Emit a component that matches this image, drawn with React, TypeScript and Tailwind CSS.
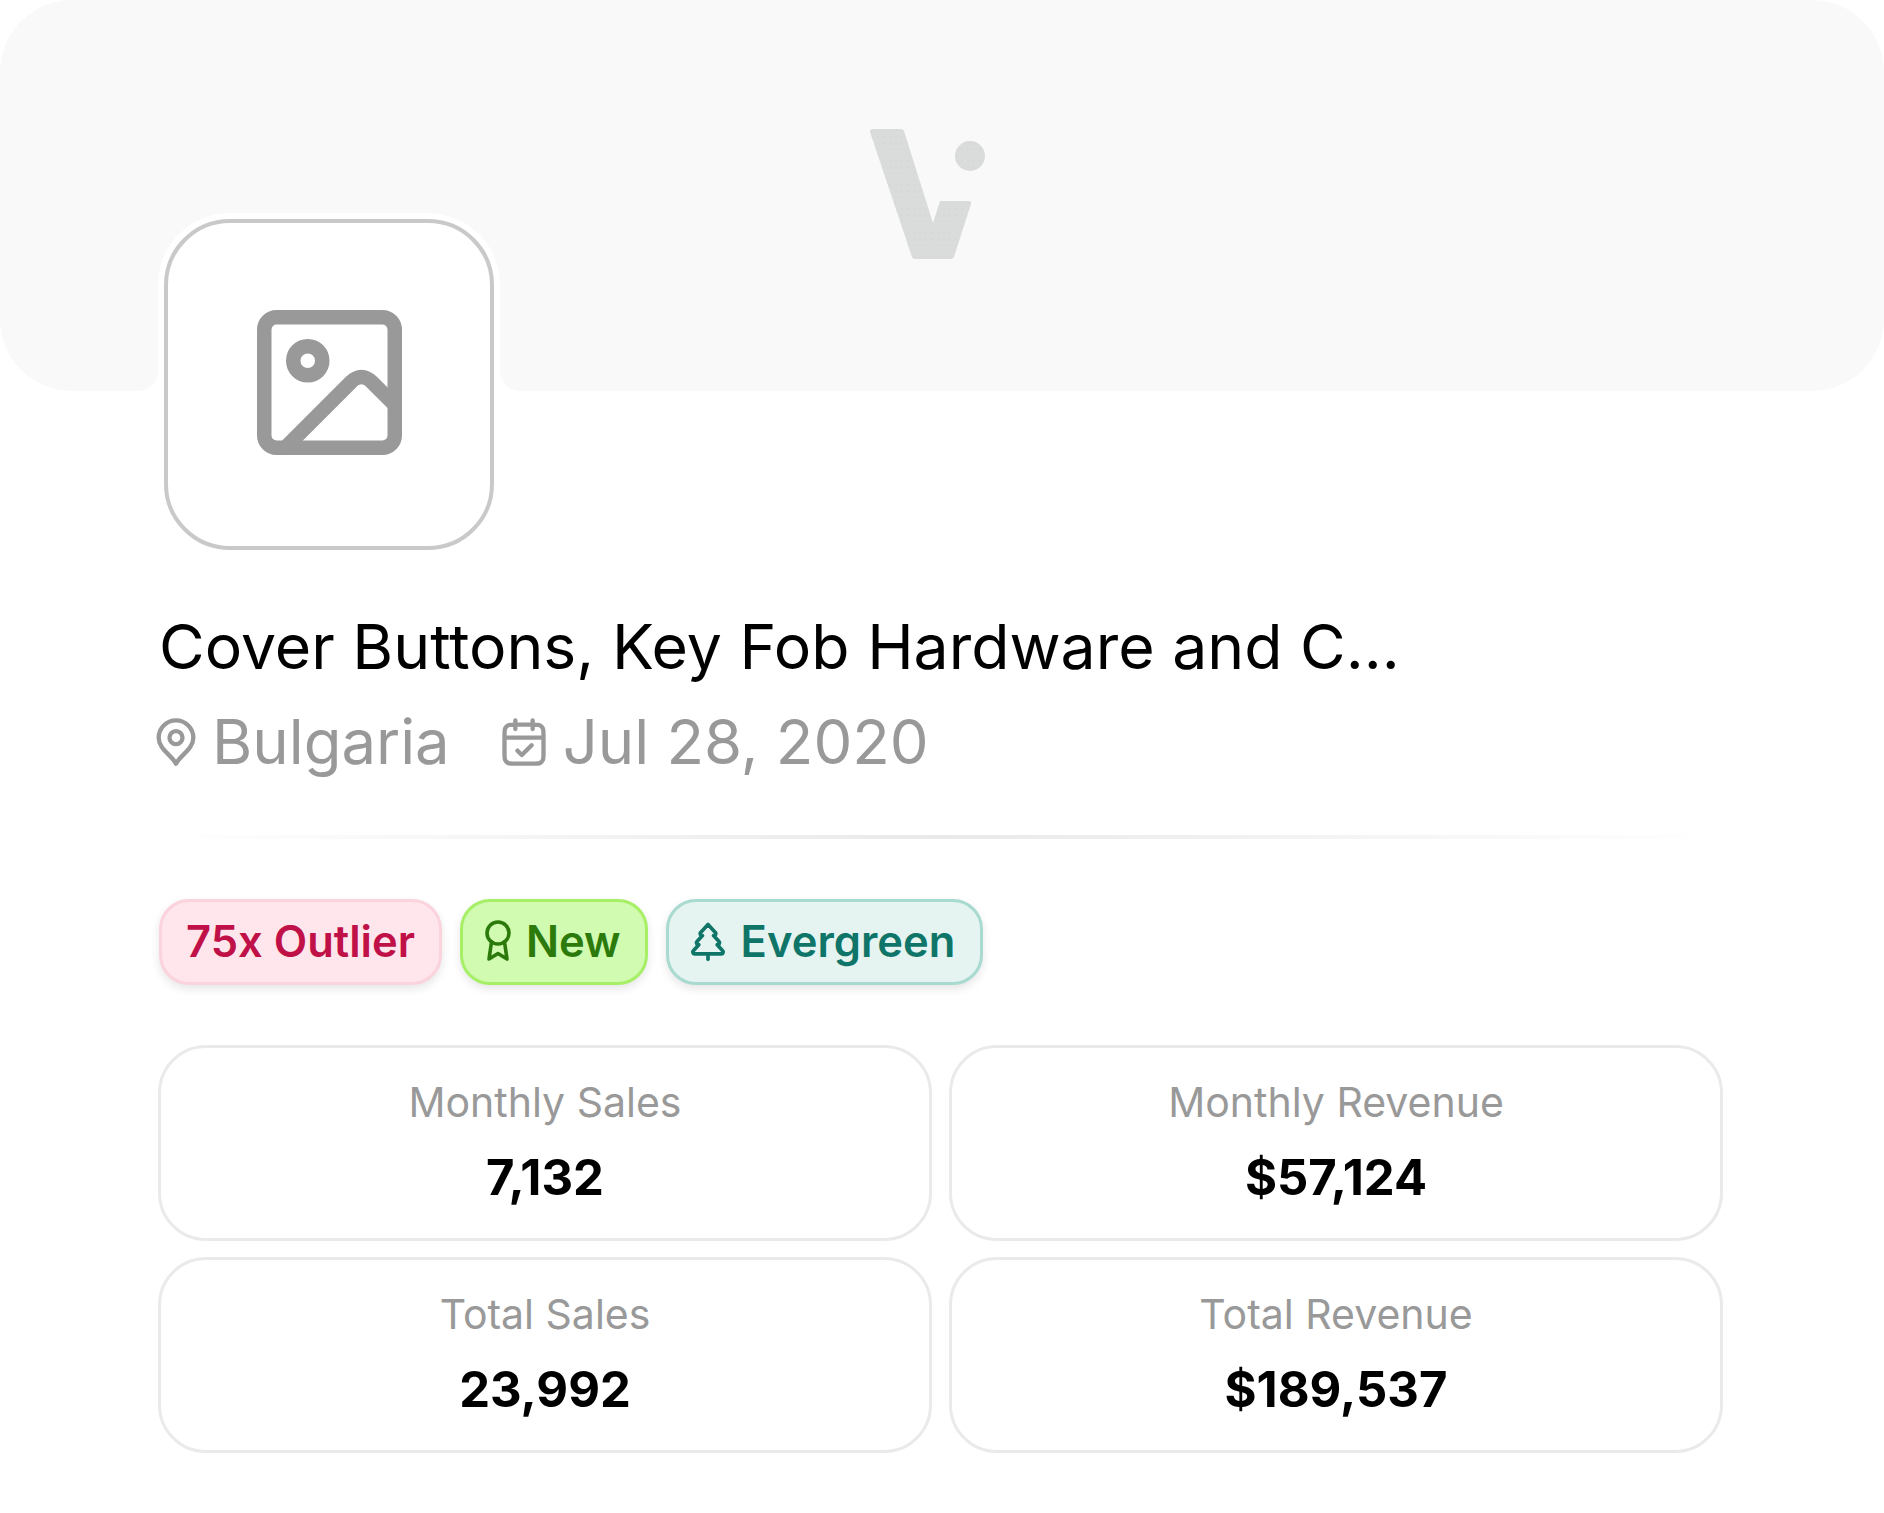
import { TreePine } from "lucide-react"

const stats = [
  { label: "Monthly Sales", value: "7,132" },
  { label: "Monthly Revenue", value: "$57,124" },
  { label: "Total Sales", value: "23,992" },
  { label: "Total Revenue", value: "$189,537" },
]

function Logo() {
  return (
    <svg width="116" height="131" viewBox="0 0 116 131">
      <defs>
        <pattern id="grain" width="6" height="6" patternUnits="userSpaceOnUse">
          <rect width="6" height="6" fill="#dadcdc" />
          <circle cx="2" cy="2" r="0.6" fill="#cbcdcd" />
        </pattern>
      </defs>
      <path
        d="M3 0H31Q33 0 34 2L63 94L70 72H99Q102 72 101 75L84 128Q83 130 81 130H45Q43 130 42 128L0 3Q0 0 3 0Z"
        fill="url(#grain)"
      />
      <circle cx="100" cy="27" r="15" fill="url(#grain)" />
    </svg>
  )
}

function ImageIcon() {
  return (
    <svg width="145" height="145" viewBox="0 0 20 20" fill="none" stroke="#999999" strokeWidth="2" strokeLinecap="round" strokeLinejoin="round">
      <rect x="1" y="1" width="18" height="18" rx="1.7" />
      <circle cx="7" cy="7" r="2" />
      <path d="M3.9 19L12.9 10Q14.4 8.5 15.9 10L19 13.1" />
    </svg>
  )
}

function PinIcon() {
  return (
    <svg width="52" height="52" viewBox="0 0 24 24" fill="none" stroke="#999999" strokeWidth="2" strokeLinecap="round" strokeLinejoin="round">
      <path d="M12 13C13.6569 13 15 11.6569 15 10C15 8.34315 13.6569 7 12 7C10.3431 7 9 8.34315 9 10C9 11.6569 10.3431 13 12 13Z" />
      <path d="M12 22C14 18 20 15.4183 20 10C20 5.58172 16.4183 2 12 2C7.58172 2 4 5.58172 4 10C4 15.4183 10 18 12 22Z" />
    </svg>
  )
}

function CalendarIcon() {
  return (
    <svg width="52" height="52" viewBox="0 0 24 24" fill="none" stroke="#999999" strokeWidth="2" strokeLinecap="round" strokeLinejoin="round">
      <path d="M21 10H3M16 2V6M8 2V6M9 16L11 18L15.5 13.5M7.8 22H16.2C17.88 22 18.72 22 19.362 21.673C19.926 21.385 20.385 20.927 20.673 20.362C21 19.72 21 18.88 21 17.2V8.8C21 7.12 21 6.28 20.673 5.638C20.385 5.074 19.926 4.615 19.362 4.327C18.72 4 17.88 4 16.2 4H7.8C6.12 4 5.28 4 4.638 4.327C4.074 4.615 3.615 5.074 3.327 5.638C3 6.28 3 7.12 3 8.8V17.2C3 18.88 3 19.72 3.327 20.362C3.615 20.927 4.074 21.385 4.638 21.673C5.28 22 6.12 22 7.8 22Z" />
    </svg>
  )
}

function RibbonIcon() {
  return (
    <svg width="28" height="44" viewBox="0 0 28 44" fill="none" stroke="#2b7a0b" strokeWidth="3.6" strokeLinecap="round" strokeLinejoin="round">
      <circle cx="14" cy="14" r="11" />
      <path d="M7.5 23L5 40L14 34.5L23 40L20.5 23" />
    </svg>
  )
}

export default function App() {
  return (
    <div className="w-[1884px] h-[1513px] bg-white font-['Inter',sans-serif] overflow-hidden">
      <div className="relative h-[391px] bg-[#f9f9f9] rounded-[72px] flex justify-center pt-[129px] pr-[29px]">
        <Logo />
        {/* little flares where the banner meets the avatar ring */}
        <div className="absolute left-[138px] bottom-0 w-[20px] h-[20px] bg-white">
          <div className="w-full h-full bg-[#f9f9f9] rounded-br-[20px]" />
        </div>
        <div className="absolute left-[500px] bottom-0 w-[20px] h-[20px] bg-white">
          <div className="w-full h-full bg-[#f9f9f9] rounded-bl-[20px]" />
        </div>
      </div>

      <div className="pl-[158px] pr-[161px]">
        <div className="relative -mt-[178px] w-[342px] h-[343px] p-[6px] bg-white rounded-[72px]">
          <div className="w-full h-full border-[4px] border-[#c9c9c9] rounded-[66px] bg-white flex items-center justify-center pb-[4px]">
            <ImageIcon />
          </div>
        </div>

        <h1 className="mt-[54px] ml-[1px] text-[62.5px] leading-[72px] font-normal text-black whitespace-nowrap">
          Cover Buttons, Key Fob Hardware and C...
        </h1>

        <div className="mt-[24px] flex items-center text-[61.6px] leading-[72px] text-[#999999] whitespace-nowrap">
          <span className="-ml-[8px]"><PinIcon /></span>
          <span className="ml-[10px]">Bulgaria</span>
          <span className="ml-[48px]"><CalendarIcon /></span>
          <span className="ml-[13px]">Jul 28, 2020</span>
        </div>

        <div className="mt-[57px] h-[4px] bg-gradient-to-r from-transparent via-[#e9e9e9] to-transparent" />

        <div className="mt-[60px] ml-[1px] flex items-center gap-[18px] text-[43.5px] leading-[52px] font-semibold whitespace-nowrap">
          <div className="h-[86px] pb-[2px] px-[24px] flex items-center border-[3px] border-[#fbd3dc] bg-[#ffe6ec] text-[#c01048] rounded-[30px] shadow-[0_4px_10px_rgba(0,0,0,0.1)]">
            75x Outlier
          </div>
          <div className="h-[86px] pb-[2px] pl-[21px] pr-[24px] flex items-center gap-[14px] border-[3px] border-[#a6ef67] bg-[#d0fbb0] text-[#2b7a0b] rounded-[30px] shadow-[0_4px_10px_rgba(0,0,0,0.1)]">
            <RibbonIcon />
            New
          </div>
          <div className="h-[86px] pb-[2px] pl-[17px] pr-[25px] flex items-center gap-[11px] border-[3px] border-[#a9dad0] bg-[#e6f4f1] text-[#107569] rounded-[30px] shadow-[0_4px_10px_rgba(0,0,0,0.1)]">
            <TreePine size={44} strokeWidth={2} />
            Evergreen
          </div>
        </div>

        <div className="mt-[60px] grid grid-cols-2 gap-x-[17px] gap-y-[16px]">
          {stats.map((stat) => (
            <div key={stat.label} className="h-[196px] border-[3px] border-[#e9eaeb] rounded-[48px] flex flex-col items-center pt-[29px]">
              <div className="text-[41px] leading-[50px] text-[#999999]">{stat.label}</div>
              <div className="mt-[21px] text-[49px] leading-[60px] font-bold text-black">{stat.value}</div>
            </div>
          ))}
        </div>
      </div>
    </div>
  )
}
